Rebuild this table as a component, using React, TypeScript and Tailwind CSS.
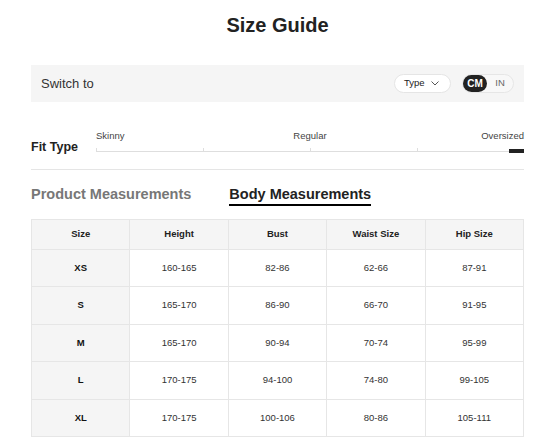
import React from 'react';

const headers = ['Size', 'Height', 'Bust', 'Waist Size', 'Hip Size'];

const rows = [
  ['XS', '160-165', '82-86', '62-66', '87-91'],
  ['S', '165-170', '86-90', '66-70', '91-95'],
  ['M', '165-170', '90-94', '70-74', '95-99'],
  ['L', '170-175', '94-100', '74-80', '99-105'],
  ['XL', '170-175', '100-106', '80-86', '105-111'],
];

const App: React.FC = () => {
  return (
    <div className="w-[545px] h-[446px] overflow-hidden bg-white font-['Liberation_Sans',Arial,sans-serif]">
      <div className="pl-[31px] pr-[21px]">
        {/* Title */}
        <h1 className="pt-[13px] text-center text-[20px] leading-[24px] font-bold text-[#222]">Size Guide</h1>

        {/* Switch bar */}
        <div className="mt-[28px] h-[37px] bg-[#f5f5f5] flex items-center justify-between pl-[10px] pr-[10px]">
          <span className="text-[13px] text-[#333]">Switch to</span>
          <div className="flex items-center gap-[11px]">
            <div className="h-[19px] w-[57px] rounded-full bg-white border border-[#e5e5e5] flex items-center pl-[9px] gap-[6px] text-[9.5px] text-[#222]">
              <span>Type</span>
              <svg width="8" height="5" viewBox="0 0 8 5" fill="none">
                <path d="M0.5 0.5 L4 4 L7.5 0.5" stroke="#444" strokeWidth="0.9" />
              </svg>
            </div>
            <div className="h-[19px] w-[52px] rounded-full border border-[#e6e6e6] bg-[#f8f8f8] flex items-center">
              <span className="h-[17px] w-[24px] rounded-full bg-[#222] text-white text-[10px] font-bold flex items-center justify-center">CM</span>
              <span className="flex-1 text-center text-[9.5px] text-[#666]">IN</span>
            </div>
          </div>
        </div>

        {/* Fit type */}
        <div className="mt-[28px] flex items-end">
          <div className="w-[65px] mb-[-2px] text-[12.5px] leading-[15px] font-bold text-[#222]">Fit Type</div>
          <div className="w-[428px] flex flex-col">
            <div className="grid grid-cols-3 text-[9.5px] leading-[12px] text-[#444]">
              <span className="text-left">Skinny</span>
              <span className="text-center">Regular</span>
              <span className="text-right">Oversized</span>
            </div>
            <svg className="mt-[6px] block" width="428" height="5" viewBox="0 0 428 5">
              <rect x="0" y="3" width="428" height="1" fill="#dedede" />
              <rect x="0" y="0" width="1" height="3" fill="#dedede" />
              <rect x="107" y="0" width="1" height="3" fill="#dedede" />
              <rect x="214" y="0" width="1" height="3" fill="#dedede" />
              <rect x="321" y="0" width="1" height="3" fill="#dedede" />
              <rect x="413" y="1" width="15" height="4" fill="#222" />
            </svg>
          </div>
        </div>

        <div className="mt-[16px] border-t border-[#e5e5e5]" />

        {/* Tabs */}
        <div className="mt-[15px] flex gap-[38px] text-[14.5px] leading-[18px] font-bold">
          <span className="text-[#777]">Product Measurements</span>
          <span className="text-[#222] border-b-2 border-black pb-[1px]">Body Measurements</span>
        </div>

        {/* Table */}
        <table className="mt-[13px] w-full table-fixed border-collapse text-[9.5px]">
          <thead>
            <tr>
              {headers.map((h) => (
                <th key={h} className="h-[30px] border border-[#e6e6e6] bg-[#f5f5f5] font-bold text-[#222] text-center">
                  {h}
                </th>
              ))}
            </tr>
          </thead>
          <tbody>
            {rows.map((r) => (
              <tr key={r[0]}>
                {r.map((c, i) => (
                  <td
                    key={i}
                    className={
                      i === 0
                        ? 'h-[37.4px] border border-[#e6e6e6] bg-[#f5f5f5] font-bold text-[#111] text-center'
                        : 'h-[37.4px] border border-[#e6e6e6] text-[#333] text-center'
                    }
                  >
                    {c}
                  </td>
                ))}
              </tr>
            ))}
          </tbody>
        </table>
      </div>
    </div>
  );
};

export default App;
